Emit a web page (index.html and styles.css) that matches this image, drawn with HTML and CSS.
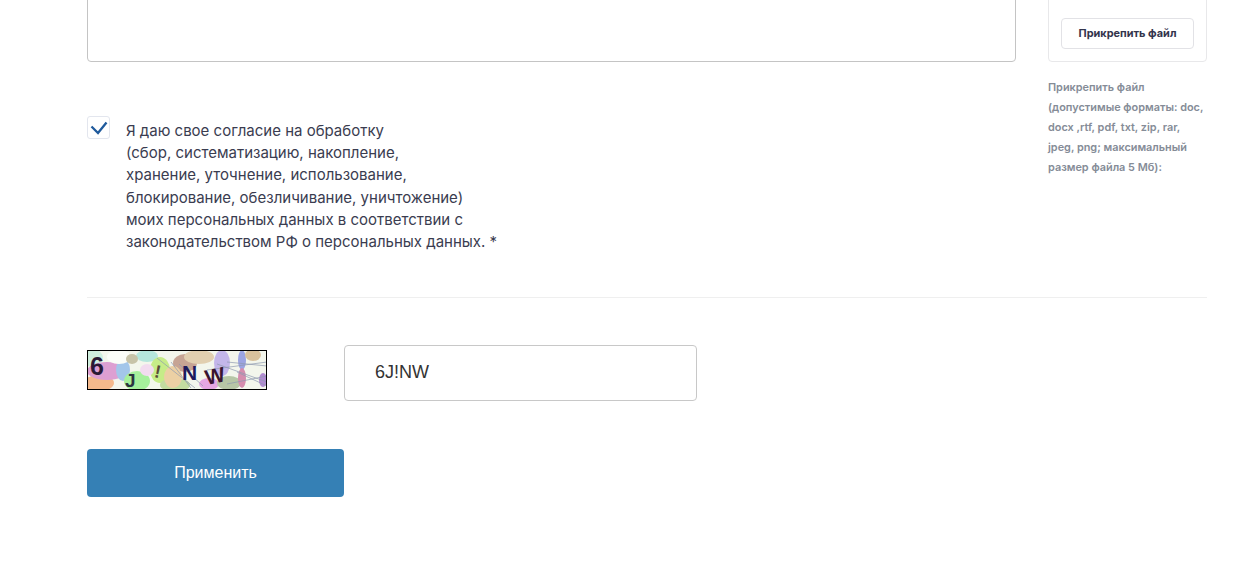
FILE: index.html
```html
<!DOCTYPE html>
<html lang="ru">
<head>
  <meta charset="UTF-8" />
  <meta name="viewport" content="width=device-width, initial-scale=1.0" />
  <title>Форма</title>
  <link rel="stylesheet" href="styles.css">
</head>
<body>
  <form class="form">
    <div class="top-row">
      <div class="main-col">
        <textarea class="message"></textarea>
        <label class="consent">
          <span class="checkbox">
            <svg width="18" height="14" viewBox="0 0 18 14"><path d="M1.5 5.5l6.5 6.5 8.5-10.5" fill="none" stroke="#1f5a9c" stroke-width="2.3"/></svg>
          </span>
          <span class="consent-text">Я даю свое согласие на обработку<br>(сбор, систематизацию, накопление,<br>хранение, уточнение, использование,<br>блокирование, обезличивание, уничтожение)<br>моих персональных данных в соответствии с<br>законодательством РФ о персональных данных. *</span>
        </label>
      </div>
      <div class="attach">
        <div class="attach-box">
          <button type="button" class="attach-button">Прикрепить файл</button>
        </div>
        <p class="attach-hint">Прикрепить файл<br>(допустимые форматы: doc,<br>docx ,rtf, pdf, txt, zip, rar,<br>jpeg, png; максимальный<br>размер файла 5 Мб):</p>
      </div>
    </div>

    <hr class="divider">

    <div class="captcha-row">
      <svg class="captcha" width="180" height="40" viewBox="0 0 180 40">
        <rect width="180" height="40" fill="#f3f6ec"/>
        <ellipse cx="6" cy="8" rx="10" ry="9" fill="#cfeedd"/>
        <ellipse cx="12" cy="33" rx="15" ry="8" fill="#f4b98c"/>
        <ellipse cx="20" cy="21" rx="20" ry="9" fill="#dd9fd2"/>
        <ellipse cx="36" cy="20" rx="7" ry="11" fill="#a3c6ea"/>
        <ellipse cx="32" cy="7" rx="12" ry="7" fill="#fbfdf8"/>
        <ellipse cx="50" cy="31" rx="13" ry="10" fill="#a6f09c"/>
        <ellipse cx="60" cy="6" rx="11" ry="6" fill="#b5e6dc"/>
        <ellipse cx="45" cy="9" rx="6" ry="5" fill="#c7c3a8"/>
        <ellipse cx="73" cy="20" rx="10" ry="13" fill="#c6ec88"/>
        <ellipse cx="60" cy="20" rx="7" ry="6" fill="#f2dcef"/>
        <ellipse cx="88" cy="35" rx="15" ry="7" fill="#c3dca0"/>
        <ellipse cx="98" cy="13" rx="12" ry="9" fill="#c6a494"/>
        <ellipse cx="86" cy="27" rx="9" ry="11" fill="#ecd0a4"/>
        <ellipse cx="112" cy="7" rx="15" ry="7" fill="#e1cfb0"/>
        <ellipse cx="135" cy="13" rx="8" ry="13" fill="#c3b6ea"/>
        <ellipse cx="122" cy="34" rx="10" ry="6" fill="#e4a7e2"/>
        <ellipse cx="142" cy="33" rx="12" ry="7" fill="#b7c6a6"/>
        <ellipse cx="155" cy="10" rx="4" ry="10" fill="#9ca4e2"/>
        <ellipse cx="166" cy="5" rx="8" ry="6" fill="#d9c19c"/>
        <ellipse cx="155" cy="28" rx="4" ry="10" fill="#d58dae"/>
        <ellipse cx="176" cy="30" rx="4" ry="7" fill="#b18cd0"/>
        <path d="M70 8l38 30M84 12l20 26M92 14l24 22M130 14l50 18M120 20l60-8M140 34l40-8M150 22l30 14M140 12l40 4" stroke="#8e9ab0" stroke-width="0.7" fill="none"/>
        <text class="captcha-char" x="3" y="25" font-size="25" fill="#2a1a35">6</text>
        <text class="captcha-char" x="38" y="37" font-size="19" fill="#2c3440">J</text>
        <text class="captcha-char" x="68" y="28" font-size="18" fill="#5a4a3a" transform="rotate(12 72 20)">!</text>
        <text class="captcha-char" x="95" y="30" font-size="21" fill="#1c1a5c">N</text>
        <text class="captcha-char" x="118" y="33" font-size="21" fill="#3a1530" transform="rotate(-12 128 26)">W</text>
        <rect x="0.5" y="0.5" width="179" height="39" fill="none" stroke="#000"/>
      </svg>
      <input class="captcha-input" type="text" value="6J!NW">
    </div>

    <button type="button" class="submit">Применить</button>
  </form>
</body>
</html>
```

FILE: styles.css
```css
html, body {
  margin: 0;
  padding: 0;
  background: #fff;
  overflow: hidden;
}
body {
  font-family: Inter, "Noto Sans", sans-serif;
  color: #3a3c50;
}
.form {
  width: 1120px;
  margin: -40px 0 0 87px;
}
.top-row {
  display: flex;
  justify-content: space-between;
  align-items: flex-start;
}
.main-col {
  width: 929px;
}
.message {
  display: block;
  width: 100%;
  height: 102px;
  box-sizing: border-box;
  border: 1px solid #c4c4c4;
  border-radius: 4px;
  background: #fff;
  resize: none;
}
.consent {
  display: flex;
  align-items: flex-start;
  margin-top: 54px;
}
.checkbox {
  flex: none;
  display: flex;
  align-items: center;
  justify-content: center;
  width: 23px;
  height: 23px;
  box-sizing: border-box;
  border: 1px solid #e3e6ee;
  border-radius: 3px;
}
.consent-text {
  margin: 4px 0 0 16px;
  font-size: 15px;
  line-height: 22.2px;
}
.attach {
  width: 159px;
}
.attach-box {
  height: 102px;
  box-sizing: border-box;
  padding: 57px 12px 0;
  border: 1px solid #e8e8ea;
  border-radius: 4px;
}
.attach-button {
  display: block;
  width: 133px;
  height: 31px;
  padding: 0 0 1px;
  border: 1px solid #e2e2e6;
  border-radius: 4px;
  background: #fff;
  color: #33344c;
  font-family: Inter, sans-serif;
  font-size: 10.9px;
  font-weight: 700;
}
.attach-hint {
  margin: 15px 0 0;
  color: #858c97;
  font-size: 10.9px;
  font-weight: 600;
  line-height: 20px;
}
.divider {
  margin: 44px 0 0;
  border: 0;
  border-top: 1px solid #efefef;
}
.captcha-row {
  display: flex;
  align-items: center;
  gap: 77px;
  margin-top: 47px;
}
.captcha {
  display: block;
  margin-top: -6px;
}
.captcha-char {
  font-family: "Liberation Sans", sans-serif;
  font-weight: 700;
}
.captcha-input {
  width: 353px;
  height: 56px;
  box-sizing: border-box;
  padding: 0 30px 2px;
  border: 1px solid #c8c8c8;
  border-radius: 4px;
  color: #333;
  font-family: "Liberation Sans", Arial, sans-serif;
  font-size: 18px;
}
.submit {
  display: block;
  width: 257px;
  height: 48px;
  margin-top: 48px;
  border: 0;
  border-radius: 4px;
  background: #3580b5;
  color: #fff;
  font-family: "Liberation Sans", Arial, sans-serif;
  font-size: 16px;
}
```
